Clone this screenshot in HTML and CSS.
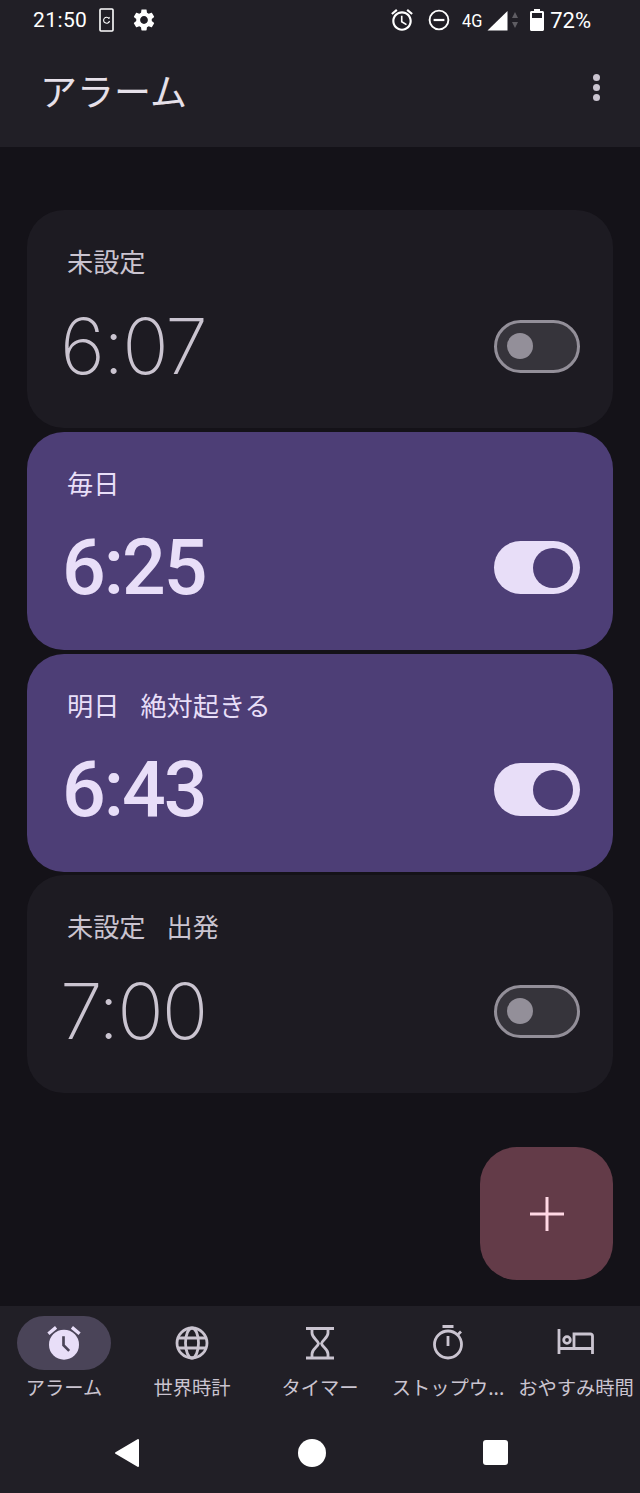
FILE: index.html
```html
<!DOCTYPE html>
<html lang="ja">
<head>
  <meta charset="UTF-8">
  <title>アラーム</title>
  <link rel="stylesheet" href="styles.css">
</head>
<body>
  <div class="phone">
    <header class="top">
      <div class="status">
        <div class="status-left">
          <span class="clock">21:50</span>
          <svg class="ic-phone" width="15" height="24" viewBox="0 0 15 24"><rect x="1" y="1" width="13" height="22" rx="1" fill="none" stroke="#fff" stroke-width="1.6"/><path d="M10 10.400A3 3 0 1 0 10.500 13" fill="none" stroke="#fff" stroke-width="1.100"/><path d="M8.800 10.800l2-.2-.2-1.900z" fill="#fff"/></svg>
          <svg class="ic-gear" width="26" height="26" viewBox="0 0 24 24"><path fill="#fff" d="M19.14 12.94c.04-.3.06-.61.06-.94 0-.32-.02-.64-.07-.94l2.03-1.58c.18-.14.23-.41.12-.61l-1.92-3.32c-.12-.22-.37-.29-.59-.22l-2.39.96c-.5-.38-1.03-.7-1.62-.94l-.36-2.54c-.04-.24-.24-.41-.48-.41h-3.84c-.24 0-.43.17-.47.41l-.36 2.54c-.59.24-1.13.57-1.62.94l-2.39-.96c-.22-.08-.47 0-.59.22L2.74 8.87c-.12.21-.08.47.12.61l2.03 1.58c-.05.3-.09.63-.09.94s.02.64.07.94l-2.03 1.58c-.18.14-.23.41-.12.61l1.92 3.32c.12.22.37.29.59.22l2.39-.96c.5.38 1.03.7 1.62.94l.36 2.54c.05.24.24.41.48.41h3.84c.24 0 .44-.17.47-.41l.36-2.54c.59-.24 1.13-.56 1.62-.94l2.39.96c.22.08.47 0 .59-.22l1.92-3.32c.12-.22.07-.47-.12-.61l-2.01-1.58zM12 15.6c-1.98 0-3.6-1.62-3.6-3.6s1.62-3.6 3.6-3.6 3.6 1.62 3.6 3.6-1.62 3.6-3.6 3.6z"/></svg>
        </div>
        <div class="status-right">
          <svg class="ic-alarm" width="26" height="26" viewBox="0 0 24 24"><path fill="#fff" d="M22 5.72l-4.6-3.86-1.29 1.53 4.6 3.86L22 5.72zM7.88 3.39L6.6 1.86 2 5.71l1.29 1.53 4.59-3.85zM12.5 8H11v6l4.75 2.85.75-1.23-4-2.37V8zM12 4c-4.97 0-9 4.03-9 9s4.02 9 9 9c4.97 0 9-4.03 9-9s-4.03-9-9-9zm0 16c-3.87 0-7-3.13-7-7s3.13-7 7-7 7 3.13 7 7-3.13 7-7 7z"/></svg>
          <svg class="ic-dnd" width="22" height="22" viewBox="0 0 22 22"><circle cx="11" cy="11" r="9.400" fill="none" stroke="#fff" stroke-width="1.900"/><rect x="5.600" y="9.900" width="10.800" height="2.200" fill="#fff"/></svg>
          <span class="net">4G</span>
          <svg class="ic-signal" width="21" height="21" viewBox="0 0 21 21"><path fill="#fff" d="M20.500 1v19.500H.5z"/></svg>
          <svg class="ic-updown" width="6" height="16" viewBox="0 0 6 16"><path fill="#5f5d63" d="M3 0l3 6H0zM3 16L0 10h6z"/></svg>
          <svg class="ic-batt" width="14" height="22" viewBox="0 0 14 22"><path fill="#fff" d="M4 0h6v2h2.500c.8 0 1.500.7 1.500 1.500v17c0 .8-.7 1.500-1.500 1.500h-11C.7 22 0 21.300 0 20.500v-17C0 2.700.7 2 1.500 2H4z"/><rect x="2" y="4" width="10" height="5" fill="#211f26"/></svg>
          <span class="pct">72%</span>
        </div>
      </div>
      <div class="appbar">
        <h1>アラーム</h1>
        <div class="kebab"><i></i><i></i><i></i></div>
      </div>
    </header>

    <main class="list">
      <section class="card">
        <div class="label">未設定</div>
        <div class="row">
          <span class="time">6:07</span>
          <span class="switch"><i></i></span>
        </div>
      </section>
      <section class="card on">
        <div class="label">毎日</div>
        <div class="row">
          <span class="time">6:25</span>
          <span class="switch"><i></i></span>
        </div>
      </section>
      <section class="card on">
        <div class="label">明日<span class="note">絶対起きる</span></div>
        <div class="row">
          <span class="time">6:43</span>
          <span class="switch"><i></i></span>
        </div>
      </section>
      <section class="card">
        <div class="label">未設定<span class="note">出発</span></div>
        <div class="row">
          <span class="time">7:00</span>
          <span class="switch"><i></i></span>
        </div>
      </section>
      <button class="fab">
        <svg width="38" height="38" viewBox="0 0 38 38"><path d="M19 2v34M2 19h34" stroke="#ffd8e4" stroke-width="3"/></svg>
      </button>
    </main>

    <nav class="tabs">
      <div class="tab active">
        <div class="pill">
          <svg width="40" height="40" viewBox="0 0 24 24"><path fill="#e8def8" d="M22 5.720l-4.600-3.860-1.290 1.530 4.600 3.860L22 5.720zM7.880 3.390L6.600 1.860 2 5.710l1.290 1.530 4.590-3.850z"/><circle cx="12" cy="13" r="9" fill="#e8def8"/><path d="M11.700 8v5.300l3.400 3.400" fill="none" stroke="#4a4458" stroke-width="1.600"/></svg>
        </div>
        <span>アラーム</span>
      </div>
      <div class="tab">
        <div class="pill">
          <svg width="36" height="36" viewBox="0 0 36 36" fill="none" stroke="#cac4d0" stroke-width="2.800"><circle cx="18" cy="18" r="15"/><ellipse cx="18" cy="18" rx="6.500" ry="15"/><path d="M4 13h28M4 23h28"/></svg>
        </div>
        <span>世界時計</span>
      </div>
      <div class="tab">
        <div class="pill">
          <svg width="36" height="36" viewBox="0 0 36 36" fill="none" stroke="#cac4d0" stroke-width="2.800"><path d="M4 3.500h28M4 33h28M10 4v4c0 5 6 7 6.500 10.500C16 22 10 24 10 29v4M26 4v4c0 5-6 7-6.500 10.500C20 22 26 24 26 29v4"/></svg>
        </div>
        <span>タイマー</span>
      </div>
      <div class="tab">
        <div class="pill">
          <svg width="36" height="36" viewBox="0 0 36 36" fill="none" stroke="#cac4d0" stroke-width="2.800"><circle cx="18" cy="19.500" r="13.500"/><path d="M12.500 1.500h11M18 11v10M28 9.500l3-3"/></svg>
        </div>
        <span>ストップウ...</span>
      </div>
      <div class="tab">
        <div class="pill">
          <svg width="40" height="36" viewBox="0 0 40 36" fill="none" stroke="#cac4d0" stroke-width="2.800"><path d="M3 4v25M3 23.500h33.500M36.500 29V11a2 2 0 0 0-2-2H18v14.500"/><circle cx="11" cy="15" r="3.300"/></svg>
        </div>
        <span>おやすみ時間</span>
      </div>
    </nav>

    <div class="sysnav">
      <svg width="26" height="30" viewBox="0 0 26 30"><path fill="#fff" stroke="#fff" stroke-width="2" stroke-linejoin="round" d="M24 2v26L2 15z"/></svg>
      <span class="home"></span>
      <span class="recents"></span>
    </div>
  </div>
</body>
</html>
```

FILE: styles.css
```css
* {
  box-sizing: border-box;
}

body {
  margin: 0;
  background-color: #141218;
  font-family: "Noto Sans CJK JP", "Roboto", sans-serif;
}

.phone {
  width: 640px;
  height: 1493px;
  display: flex;
  flex-direction: column;
  overflow: hidden;
}

/* status + title */
.top {
  height: 147px;
  background-color: #211f26;
  color: #fff;
}

.status {
  height: 40px;
  padding: 0 49px 0 33px;
  display: flex;
  justify-content: space-between;
  align-items: center;
  font-family: "Roboto", sans-serif;
}

.status-left,
.status-right {
  display: flex;
  align-items: center;
}

.clock {
  font-size: 21px;
  font-weight: 400;
  letter-spacing: 0.4px;
}

.ic-phone {
  margin-left: 12px;
}

.ic-gear {
  margin-left: 17px;
}

.ic-dnd {
  margin-left: 13px;
}

.net {
  margin-left: 12px;
  width: 25px;
  font-size: 19px;
  transform: scaleX(0.86);
  transform-origin: left center;
}

.ic-updown {
  margin-left: 4px;
}

.ic-batt {
  margin-left: 12px;
}

.pct {
  margin-left: 6px;
  font-size: 22px;
}

.appbar {
  height: 107px;
  padding: 0 40px 0 40px;
  display: flex;
  justify-content: space-between;
  align-items: center;
  padding-bottom: 8px;
}

.appbar h1 {
  margin: 0;
  font-size: 37px;
  font-weight: 400;
  line-height: 52px;
  color: #e6e0e9;
}

.kebab {
  display: flex;
  flex-direction: column;
  gap: 3px;
  margin-bottom: 4px;
}

.kebab i {
  width: 7px;
  height: 7px;
  border-radius: 50%;
  background-color: #cac4d0;
}

/* alarm cards */
.list {
  position: relative;
  flex: 1;
  padding: 63px 27px 0;
  display: flex;
  flex-direction: column;
  gap: 3.750px;
}

.card {
  height: 218px;
  padding: 31px 33px 0 40px;
  border-radius: 37px;
  background-color: #1d1b22;
  color: #cac4d0;
}

.card.on {
  background-color: #4d3e76;
  color: #e8def8;
}

.label {
  font-size: 26.200px;
  line-height: 40px;
}

.note {
  margin-left: 21px;
}

.row {
  margin-top: 25px;
  height: 80px;
  display: flex;
  justify-content: space-between;
  align-items: center;
}

.time {
  font-family: "Inter", sans-serif;
  font-size: 77px;
  font-weight: 200;
  line-height: 80px;
  letter-spacing: -2px;
  margin-left: -7px;
}

.on .time {
  font-family: "Roboto", sans-serif;
  font-weight: 500;
  margin-left: -5px;
}

.switch {
  width: 86px;
  height: 53px;
  border-radius: 27px;
  border: 3px solid #938f99;
  background-color: #36343b;
  display: flex;
  align-items: center;
  padding-left: 10px;
}

.switch i {
  width: 26px;
  height: 26px;
  border-radius: 50%;
  background-color: #938f99;
}

.on .switch {
  border: 0;
  background-color: #e8def8;
  justify-content: flex-end;
  padding: 0 7px 0 0;
}

.on .switch i {
  width: 40px;
  height: 40px;
  background-color: #4d3e76;
}

.fab {
  position: absolute;
  top: 1000px;
  right: 27px;
  width: 133px;
  height: 133px;
  border: none;
  border-radius: 37px;
  background-color: #633b48;
  display: flex;
  align-items: center;
  justify-content: center;
  padding: 0;
}

/* bottom tabs */
.tabs {
  height: 106px;
  background-color: #211f26;
  display: grid;
  grid-template-columns: repeat(5, 128px);
  padding-top: 10px;
}

.tab {
  display: flex;
  flex-direction: column;
  align-items: center;
  min-width: 0;
  color: #cac4d0;
  font-size: 19.300px;
  line-height: 28px;
}

.tab span {
  margin-top: 3px;
  white-space: nowrap;
}

.pill {
  width: 94px;
  height: 54px;
  border-radius: 27px;
  display: flex;
  align-items: center;
  justify-content: center;
}

.active .pill {
  background-color: #4a4458;
}

.sysnav {
  height: 81px;
  background-color: #211f26;
  display: flex;
  align-items: center;
  padding: 0 132px 0 114px;
  justify-content: space-between;
}

.home {
  width: 28px;
  height: 28px;
  border-radius: 50%;
  background-color: #fff;
}

.recents {
  width: 25px;
  height: 25px;
  border-radius: 3px;
  background-color: #fff;
}
```
